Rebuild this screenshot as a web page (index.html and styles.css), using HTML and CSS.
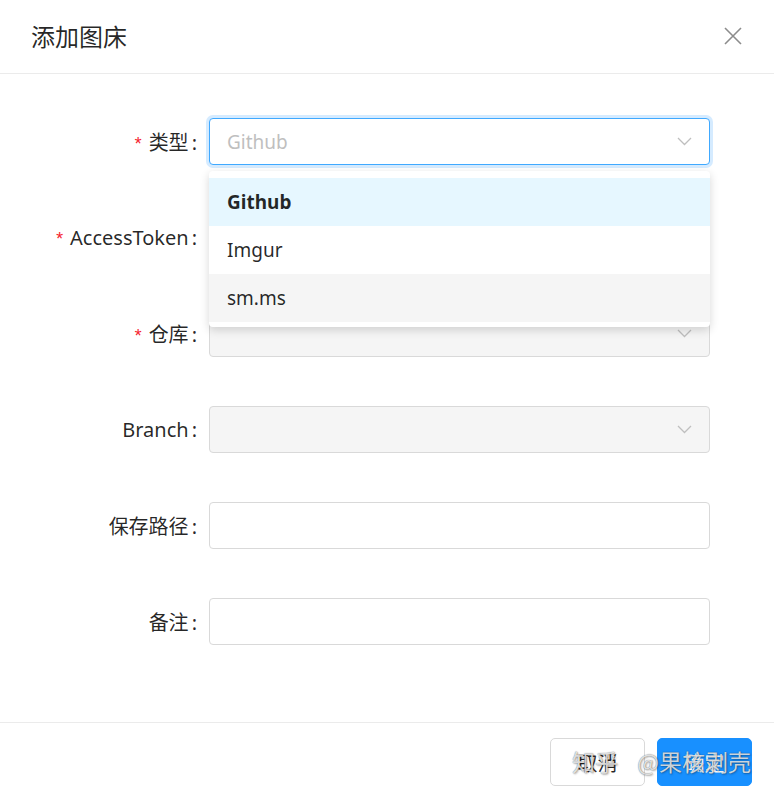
FILE: index.html
```html
<!doctype html>
<html>
    <head>
        <title>添加图床</title>
        <link rel="stylesheet" href="styles.css">
    </head>
    <body>
        <div class="modal">
            <div class="modal-header">
                <div class="modal-title">添加图床</div>
                <span class="modal-close">
                    <svg width="18" height="18" viewBox="0 0 18 18"><path d="M1 1 L17 17 M17 1 L1 17" stroke="#8c8c8c" stroke-width="1.6" fill="none"/></svg>
                </span>
            </div>

            <div class="modal-body">
                <div class="form-row">
                    <label class="form-label"><span class="req">*</span>类型<span class="colon">:</span></label>
                    <div class="field">
                        <div class="select focused">
                            <span class="placeholder">Github</span>
                            <svg class="arrow" width="15" height="9" viewBox="0 0 15 9"><path d="M1 1 L7.5 7.5 L14 1" stroke="#bfbfbf" stroke-width="1.3" fill="none"/></svg>
                        </div>
                        <ul class="dropdown">
                            <li class="active">Github</li>
                            <li>Imgur</li>
                            <li class="hover">sm.ms</li>
                        </ul>
                    </div>
                </div>

                <div class="form-row">
                    <label class="form-label"><span class="req">*</span>AccessToken<span class="colon">:</span></label>
                    <div class="field"><div class="input"></div></div>
                </div>

                <div class="form-row">
                    <label class="form-label"><span class="req">*</span>仓库<span class="colon">:</span></label>
                    <div class="field">
                        <div class="select disabled">
                            <svg class="arrow" width="15" height="9" viewBox="0 0 15 9"><path d="M1 1 L7.5 7.5 L14 1" stroke="#bfbfbf" stroke-width="1.3" fill="none"/></svg>
                        </div>
                    </div>
                </div>

                <div class="form-row">
                    <label class="form-label">Branch<span class="colon">:</span></label>
                    <div class="field">
                        <div class="select disabled">
                            <svg class="arrow" width="15" height="9" viewBox="0 0 15 9"><path d="M1 1 L7.5 7.5 L14 1" stroke="#bfbfbf" stroke-width="1.3" fill="none"/></svg>
                        </div>
                    </div>
                </div>

                <div class="form-row">
                    <label class="form-label">保存路径<span class="colon">:</span></label>
                    <div class="field"><div class="input"></div></div>
                </div>

                <div class="form-row">
                    <label class="form-label">备注<span class="colon">:</span></label>
                    <div class="field"><div class="input"></div></div>
                </div>
            </div>

            <div class="modal-footer">
                <button class="btn">取消</button>
                <button class="btn btn-primary">确定</button>
                <span class="watermark">知乎 @果核剥壳</span>
            </div>
        </div>
    </body>
</html>
```

FILE: styles.css
```css
body{
    margin: 0;
    background: #fff;
    font-family: "Noto Sans", "Noto Sans CJK SC", sans-serif;
    color: rgba(0,0,0,0.85);
}
.modal{
    width: 774px;
    height: 796px;
    overflow: hidden;
    position: relative;
}
.modal-header{
    height: 74px;
    border-bottom: 1px solid #ebebeb;
    display: flex;
    align-items: center;
    justify-content: space-between;
    padding: 0 32px 0 31px;
    box-sizing: border-box;
}
.modal-title{
    font-size: 24px;
    color: rgba(0,0,0,0.85);
    padding-bottom: 2px;
}
.modal-close{
    display: flex;
    padding-bottom: 2px;
}

.modal-body{
    padding: 44px 64px 30px 0;
    height: 648px;
    box-sizing: border-box;
}
.form-row{
    display: grid;
    grid-template-columns: 197px 501px;
    column-gap: 12px;
    align-items: center;
    margin-bottom: 49px;
}
.form-label{
    text-align: right;
    font-size: 20px;
    white-space: nowrap;
}
.colon{
    margin-left: 3px;
}
.req{
    color: #f5222d;
    font-family: "Liberation Mono", monospace;
    font-size: 18px;
    margin-right: 5px;
}
.field{
    position: relative;
}
.input,
.select{
    height: 47px;
    border: 1px solid #d9d9d9;
    border-radius: 4px;
    box-sizing: border-box;
    background: #fff;
    display: flex;
    align-items: center;
    padding: 0 17px;
}
.select .arrow{
    margin-left: auto;
}
.select.focused{
    border-color: #40a9ff;
    box-shadow: 0 0 0 3px rgba(24,144,255,0.18);
}
.select.disabled{
    background: #f5f5f5;
}
.placeholder{
    color: #bfbfbf;
    font-size: 19px;
}

.dropdown{
    position: absolute;
    left: 0;
    right: 0;
    top: 53px;
    margin: 0;
    padding: 7px 0 5px;
    list-style: none;
    background: #fff;
    border-radius: 4px;
    box-shadow: 0 3px 10px rgba(0,0,0,0.16);
    z-index: 10;
}
.dropdown li{
    height: 48px;
    line-height: 49px;
    padding: 0 18px;
    font-size: 19px;
    color: rgba(0,0,0,0.85);
}
.dropdown li.active{
    background: #e6f7ff;
    font-weight: bold;
}
.dropdown li.hover{
    background: #f5f5f5;
}

.modal-footer{
    border-top: 1px solid #ebebeb;
    display: flex;
    justify-content: flex-end;
    gap: 12px;
    padding: 15px 22px;
    position: relative;
}
.btn{
    width: 95px;
    height: 48px;
    border: 1px solid #d9d9d9;
    border-radius: 5px;
    background: #fff;
    font-family: "Noto Sans CJK SC", sans-serif;
    font-size: 20px;
    color: rgba(0,0,0,0.85);
    padding: 0;
}
.btn-primary{
    background: #1890ff;
    border-color: #1890ff;
    color: #fff;
}
/* watermark from the original screenshot, drawn over the buttons */
.watermark{
    position: absolute;
    left: 572px;
    top: 21px;
    font-family: "Noto Sans CJK SC", sans-serif;
    font-size: 23px;
    word-spacing: 14px;
    color: rgba(255,255,255,0.8);
    text-shadow: 0 0 1px rgba(0,0,0,0.6), 1px 1px 2px rgba(0,0,0,0.3);
    white-space: nowrap;
    pointer-events: none;
}
```
